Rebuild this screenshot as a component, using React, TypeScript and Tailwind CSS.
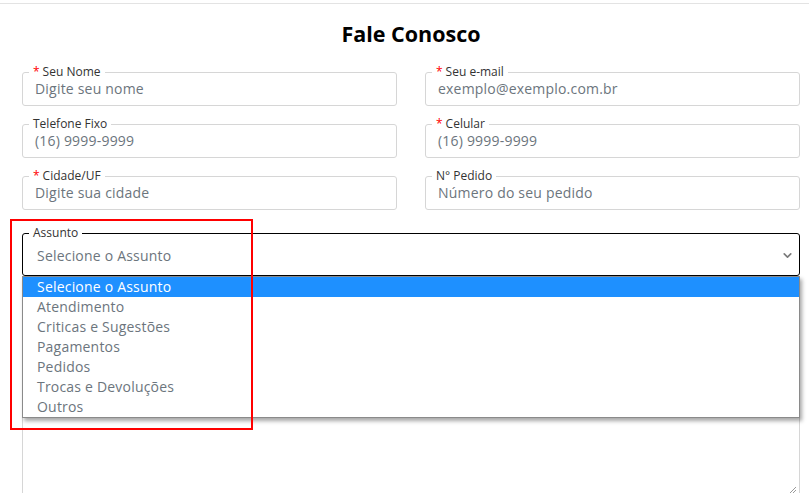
import { ChevronDown } from "lucide-react"

const fields = [
  { label: "Seu Nome", required: true, placeholder: "Digite seu nome" },
  { label: "Seu e-mail", required: true, placeholder: "exemplo@exemplo.com.br" },
  { label: "Telefone Fixo", required: false, placeholder: "(16) 9999-9999" },
  { label: "Celular", required: true, placeholder: "(16) 9999-9999" },
  { label: "Cidade/UF", required: true, placeholder: "Digite sua cidade" },
  { label: "N° Pedido", required: false, placeholder: "Número do seu pedido" },
]

const options = [
  "Selecione o Assunto",
  "Atendimento",
  "Criticas e Sugestões",
  "Pagamentos",
  "Pedidos",
  "Trocas e Devoluções",
  "Outros",
]

function Field({ label, required, placeholder }: { label: string; required: boolean; placeholder: string }) {
  return (
    <fieldset className="border border-[#d6d6d6] rounded-[3px] px-[6px] h-[41px]">
      <legend className="px-[4px] text-[12px] leading-[14px] text-[#333]">
        {required && <span className="text-[#ff0000] mr-[3px]">*</span>}
        {label}
      </legend>
      <div className="h-[20px] leading-[20px] pl-[6px] text-[14px] text-[#6c757d] tracking-[0.2px]">{placeholder}</div>
    </fieldset>
  )
}

export default function App() {
  return (
    <div className="relative h-[493px] overflow-hidden bg-white font-['Open_Sans',sans-serif]">
      <div className="h-[3px]" />
      <div className="border-t border-[#e3e3e3]" />

      <h1 className="mt-[16px] text-center text-[21.5px] leading-[28px] font-bold text-black pl-[13px]">Fale Conosco</h1>

      <div className="pl-[22px] pr-[9px] mt-[17px]">
        {/* Contact fields */}
        <div className="grid grid-cols-2 gap-x-[28px] gap-y-[11px]">
          {fields.map((f) => (
            <Field key={f.label} {...f} />
          ))}
        </div>

        {/* Assunto select with open list */}
        <div className="relative mt-[16px]">
          <fieldset className="border border-black rounded-[3px] px-[6px] h-[50px]">
            <legend className="px-[4px] text-[12px] leading-[14px] text-[#333]">Assunto</legend>
            <div className="flex items-center justify-between h-[31px] pl-[8px] text-[14px] text-[#6c757d] tracking-[0.2px]">
              <span>Selecione o Assunto</span>
              <ChevronDown size={13} strokeWidth={3} className="text-[#7a7a7a] -mr-[1px]" />
            </div>
          </fieldset>

          <ul className="absolute left-0 right-0 top-full z-10 bg-white border border-[#8a8a8a] shadow-[2px_3px_4px_rgba(0,0,0,0.35)]">
            {options.map((o, i) => (
              <li
                key={o}
                className={`h-[20px] leading-[20px] pl-[14px] text-[14px] tracking-[0.2px] ${
                  i === 0 ? "bg-[#1e90ff] text-white" : "text-[#6c757d]"
                }`}
              >
                {o}
              </li>
            ))}
          </ul>
        </div>

        {/* Mensagem textarea (hidden behind the open list) */}
        <div className="relative mt-[20px] border border-[#d6d6d6] rounded-[3px] h-[230px]">
          <svg width="8" height="8" viewBox="0 0 8 8" className="absolute right-[2px] top-[189px] text-[#9a9a9a]">
            <path d="M1 7 L7 1 M4 7 L7 4" stroke="currentColor" strokeWidth="1" />
          </svg>
        </div>
      </div>

      {/* Highlight annotation */}
      <div className="absolute left-[10px] top-[219px] w-[243px] h-[211px] border-2 border-[#ff0000] z-20 pointer-events-none" />
    </div>
  )
}
